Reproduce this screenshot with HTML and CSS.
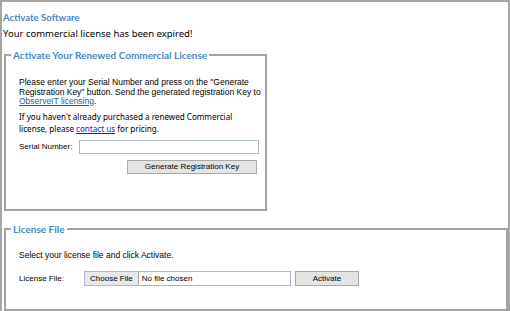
FILE: index.html
```html
<!DOCTYPE html>
<html>
<head>
<meta charset="utf-8">
<link rel="stylesheet" href="styles.css">
</head>
<body>
<div class="page">
  <h1 class="title">Activate Software</h1>
  <p class="expired">Your commercial license has been expired!</p>

  <fieldset class="box box-renew">
    <legend class="legend">Activate Your Renewed Commercial License</legend>
    <p class="small">Please enter your Serial Number and press on the "Generate Registration Key" button. Send the generated registration Key to <a class="link-dark" href="#">ObserveIT licensing</a>.</p>
    <p class="info">If you haven't already purchased a renewed Commercial license, please <a class="link" href="#">contact us</a> for pricing.</p>
    <div class="row">
      <span class="label label-serial">Serial Number:</span>
      <span class="input input-serial"></span>
    </div>
    <div class="row row-right">
      <span class="btn btn-gen">Generate Registration Key</span>
    </div>
  </fieldset>

  <fieldset class="box box-file">
    <legend class="legend">License File</legend>
    <p class="small small-file">Select your license file and click Activate.</p>
    <div class="row row-file">
      <span class="label label-file">License File:</span>
      <span class="file">
        <span class="file-btn">Choose File</span>
        <span class="file-name">No file chosen</span>
      </span>
      <span class="btn btn-act">Activate</span>
    </div>
  </fieldset>
</div>
</body>
</html>
```

FILE: styles.css
```css
html, body {
  margin: 0;
  padding: 0;
  background: #fff;
  overflow: hidden;
}
.page {
  box-sizing: border-box;
  width: 510px;
  height: 330px;
  border: 2px solid #a6a6a6;
  padding: 9px 0 0 0;
  font-family: "Liberation Sans", Arial, sans-serif;
  color: #000;
}
.title {
  margin: 0 0 0 1px;
  font-family: Lato, sans-serif;
  font-weight: bold;
  font-size: 9.6px;
  line-height: 14px;
  color: #4a86c6;
}
.expired {
  margin: 2px 0 0 1px;
  font-family: "Noto Sans", sans-serif;
  font-size: 9.5px;
  line-height: 14px;
}
.box {
  margin: 7px 0 0 2px;
  padding: 0 0 0 13px;
  border: 2px solid #a3a3a3;
  min-inline-size: 0;
}
.box-renew {
  width: 246px;
  height: 159px;
}
.box-file {
  margin-top: 11px;
  width: 487px;
  height: 85px;
}
.legend {
  margin-left: -8px;
  padding: 0 2px;
  font-family: Lato, sans-serif;
  font-weight: bold;
  font-size: 10px;
  line-height: 14px;
  color: #4a86c6;
}
.small {
  margin: 16px 0 0 0;
  font-size: 8.5px;
  line-height: 9.5px;
}
.small-file {
  margin-top: 15px;
}
.info {
  margin: 4px 0 0 0;
  padding-right: 14px;
  font-family: "Noto Sans", sans-serif;
  font-size: 8.1px;
  line-height: 12px;
}
.link-dark {
  color: #1f5e8e;
}
.link {
  color: #1a1aee;
}
.row {
  display: flex;
  align-items: center;
  margin-top: 5px;
  font-size: 8px;
}
.row-right {
  justify-content: flex-end;
  padding-right: 8px;
  margin-top: 6px;
}
.label-serial {
  width: 60px;
}
.input {
  display: block;
  box-sizing: border-box;
  height: 14px;
  border: 1px solid #a9b9c9;
  background: #fff;
}
.input-serial {
  width: 180px;
}
.btn {
  box-sizing: border-box;
  display: flex;
  align-items: center;
  justify-content: center;
  height: 14px;
  border: 1px solid #a8a8a8;
  background: #e3e3e3;
  font-size: 8px;
}
.btn-gen {
  width: 130px;
}
.row-file {
  margin-top: 10px;
}
.label-file {
  width: 65px;
}
.file {
  box-sizing: border-box;
  display: flex;
  width: 207px;
  height: 15px;
  border: 1px solid #a9b9c9;
}
.file-btn {
  display: flex;
  align-items: center;
  padding: 0 5px;
  background: #e8e8e8;
  border-right: 1px solid #a8a8a8;
  font-size: 8px;
}
.file-name {
  display: flex;
  align-items: center;
  padding-left: 3px;
  font-size: 8px;
}
.btn-act {
  width: 64px;
  margin-left: 4px;
  height: 15px;
}
```
